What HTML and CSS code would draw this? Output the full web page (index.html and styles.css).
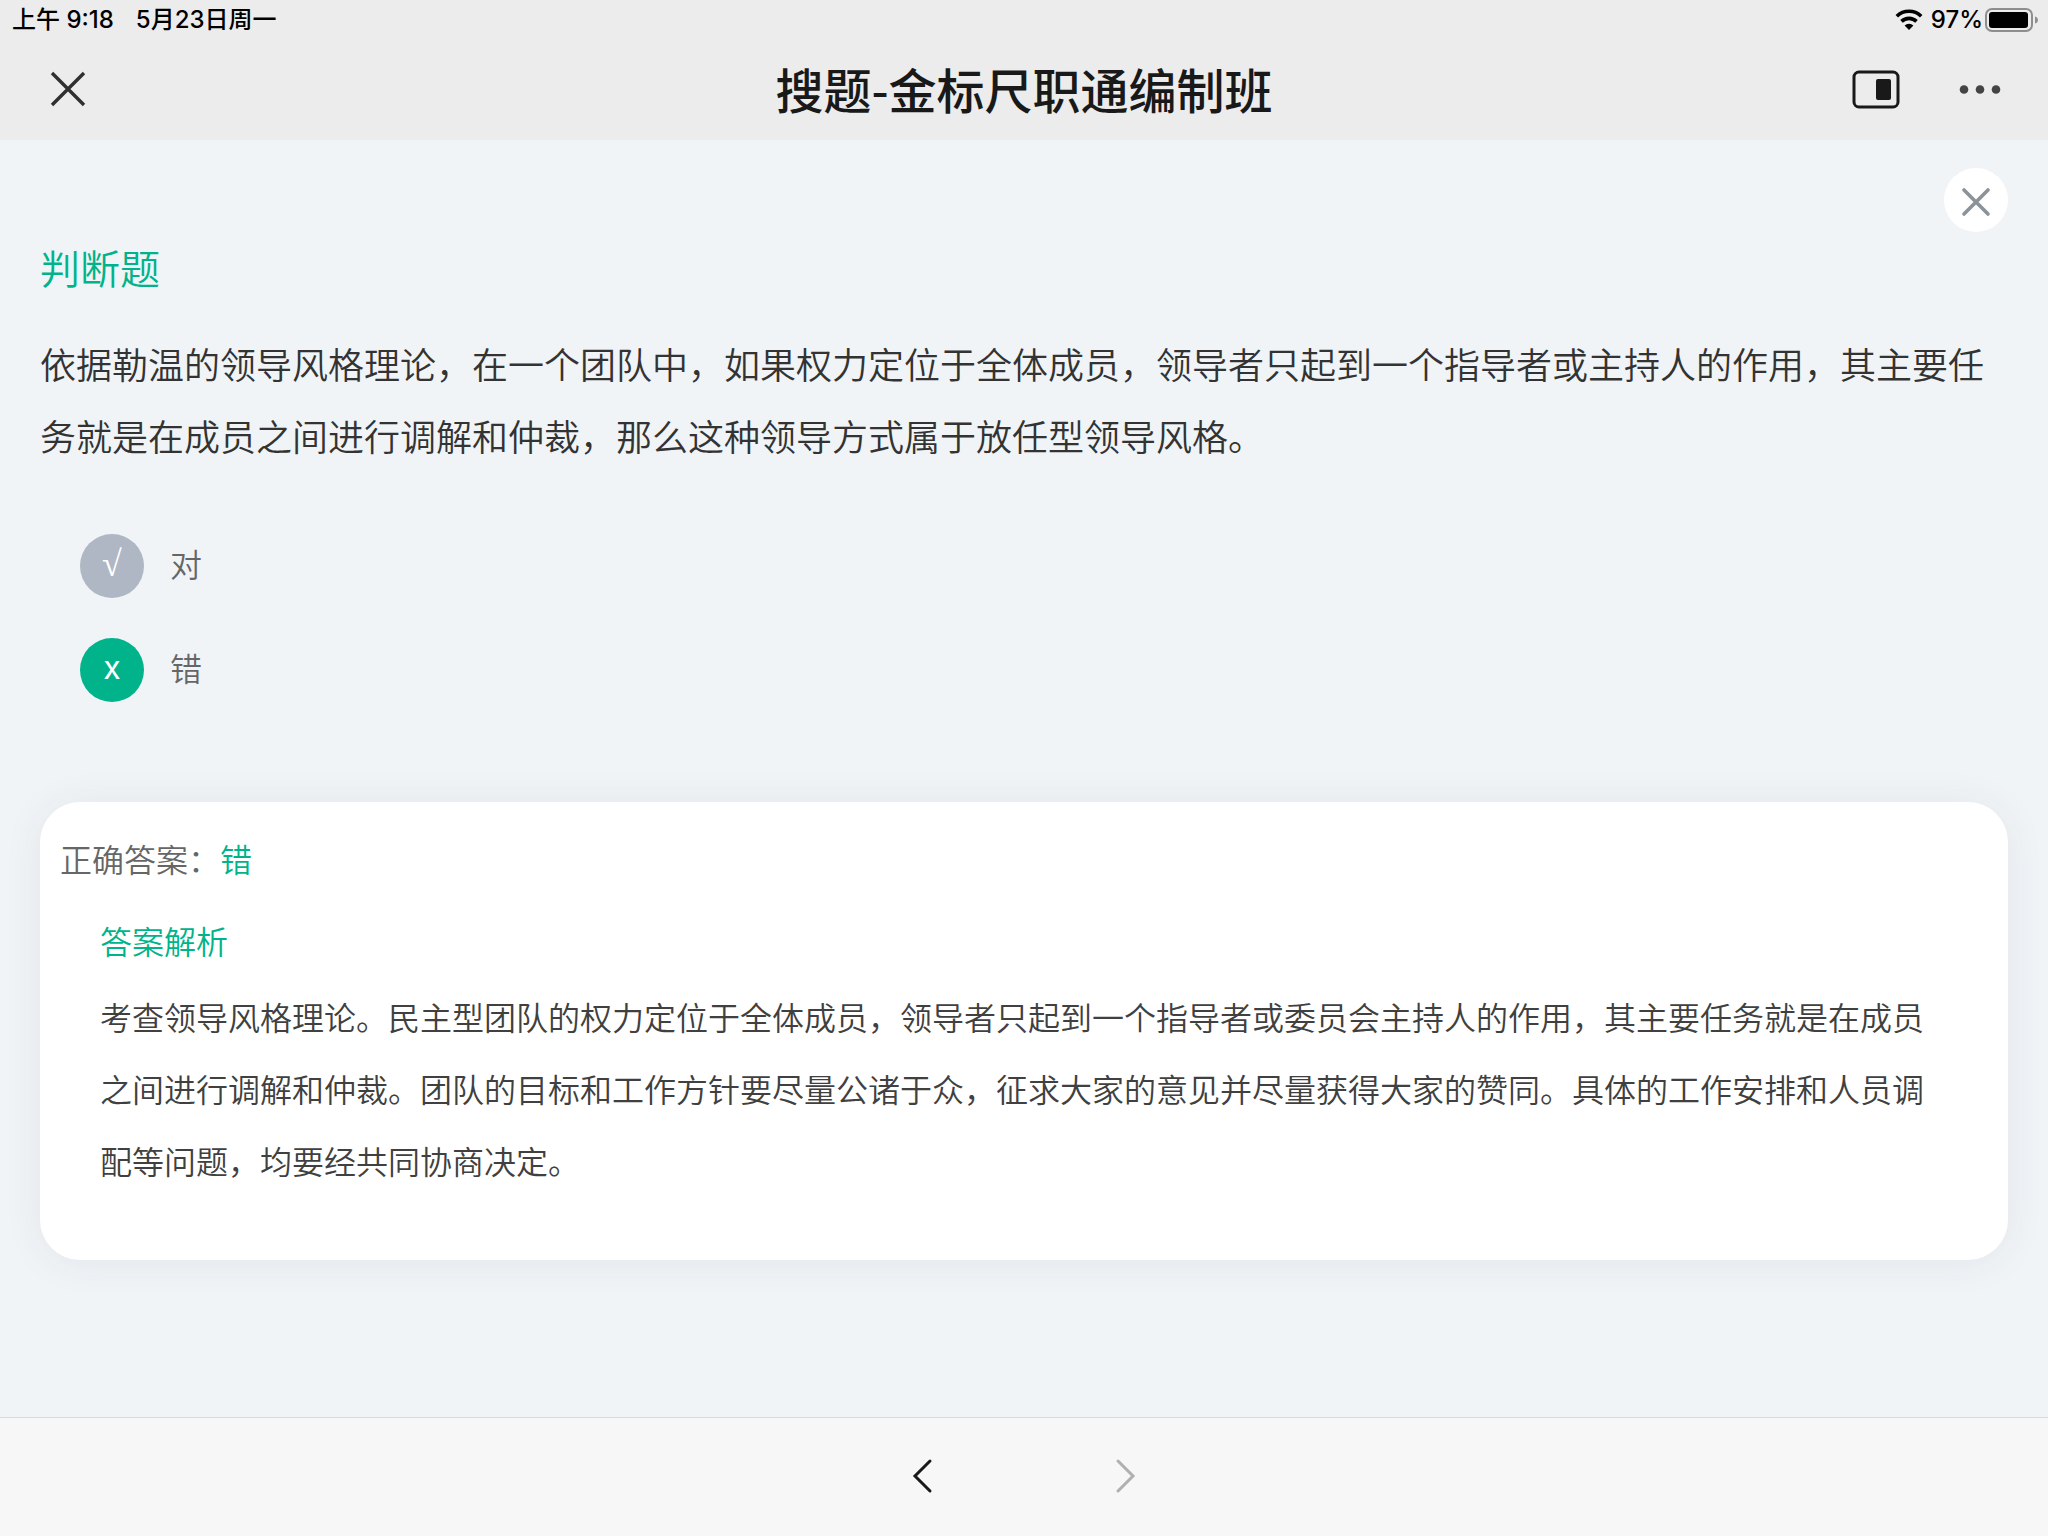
FILE: index.html
```html
<!DOCTYPE html>
<html lang="zh-CN">
<head>
<meta charset="utf-8">
<meta name="viewport" content="width=device-width, initial-scale=1">
<title>搜题-金标尺职通编制班</title>
<link rel="stylesheet" href="styles.css">
</head>
<body>
<header class="top">
  <div class="status">
    <div class="status-group status-time">
      <span>上午 9:18</span>
      <span>5月23日周一</span>
    </div>
    <div class="status-group status-power">
      <svg class="wifi" viewBox="0 0 28 22" aria-hidden="true">
        <path d="M1.800 7.200a17.500 17.500 0 0 1 24.400 0" fill="none" stroke="#000" stroke-width="3.600"/>
        <path d="M6.500 12.400a10.800 10.800 0 0 1 15 0" fill="none" stroke="#000" stroke-width="3.600"/>
        <path d="M14 21l-4.400-4.400a6.300 6.300 0 0 1 8.800 0z" fill="#000"/>
      </svg>
      <span>97%</span>
      <svg class="battery" viewBox="0 0 54 24" aria-hidden="true">
        <rect x="1" y="1" width="46" height="22" rx="6" fill="none" stroke="#8e8e8e" stroke-width="2"/>
        <rect x="4" y="4" width="39" height="16" rx="3" fill="#000"/>
        <path d="M50 8.500c4 1 4 6 0 7z" fill="#8e8e8e"/>
      </svg>
    </div>
  </div>
  <div class="titlebar">
    <div class="titlebar-side">
      <button class="icon-button" type="button" aria-label="关闭">
        <svg viewBox="0 0 48 40"><path d="M8 3l32 32M40 3L8 35" stroke="#303030" stroke-width="3.400" fill="none"/></svg>
      </button>
    </div>
    <h1 class="page-title">搜题-金标尺职通编制班</h1>
    <div class="titlebar-side titlebar-actions">
      <button class="icon-button" type="button" aria-label="浮窗">
        <svg viewBox="0 0 48 40"><rect x="2" y="2" width="44" height="35" rx="5" fill="none" stroke="#191919" stroke-width="3"/><rect x="24" y="9" width="15" height="21" rx="2" fill="#191919"/></svg>
      </button>
      <button class="icon-button" type="button" aria-label="更多">
        <svg viewBox="0 0 48 40" fill="#444"><circle cx="8" cy="19.500" r="4.300"/><circle cx="24" cy="19.500" r="4.300"/><circle cx="40" cy="19.500" r="4.300"/></svg>
      </button>
    </div>
  </div>
</header>

<main class="content">
  <button class="dismiss" type="button" aria-label="关闭题目">
    <svg viewBox="0 0 64 64"><path d="M20 22l24 24M44 22L20 46" stroke="#8b9298" stroke-width="3.600" stroke-linecap="round" fill="none"/></svg>
  </button>
  <h2 class="kind">判断题</h2>
  <p class="question" id="question">依据勒温的领导风格理论，在一个团队中，如果权力定位于全体成员，领导者只起到一个指导者或主持人的作用，其主要任务就是在成员之间进行调解和仲裁，那么这种领导方式属于放任型领导风格。</p>
  <div class="options" role="radiogroup" aria-labelledby="question">
    <label class="option">
      <input class="option-input" type="radio" name="answer" value="true">
      <span class="option-mark option-mark-root" aria-hidden="true">√</span>
      <span class="option-text">对</span>
    </label>
    <label class="option">
      <input class="option-input" type="radio" name="answer" value="false" checked>
      <span class="option-mark" aria-hidden="true">x</span>
      <span class="option-text">错</span>
    </label>
  </div>
  <section class="card">
    <p class="correct">正确答案：<span class="correct-value">错</span></p>
    <div class="analysis">
      <h3 class="analysis-title">答案解析</h3>
      <p class="analysis-text">考查领导风格理论。民主型团队的权力定位于全体成员，领导者只起到一个指导者或委员会主持人的作用，其主要任务就是在成员之间进行调解和仲裁。团队的目标和工作方针要尽量公诸于众，征求大家的意见并尽量获得大家的赞同。具体的工作安排和人员调配等问题，均要经共同协商决定。</p>
    </div>
  </section>
</main>

<nav class="pager" aria-label="页面导航">
  <button class="pager-button" type="button" aria-label="后退">
    <svg viewBox="0 0 40 40"><path d="M27 4L12 19l15 15" fill="none" stroke="#191919" stroke-width="3" stroke-linecap="round"/></svg>
  </button>
  <button class="pager-button" type="button" aria-label="前进" disabled>
    <svg viewBox="0 0 40 40"><path d="M13 4l15 15-15 15" fill="none" stroke="#b0b0b0" stroke-width="3" stroke-linecap="round"/></svg>
  </button>
</nav>
</body>
</html>
```
FILE: styles.css
```css
* {
  box-sizing: border-box;
}

body {
  margin: 0;
  min-height: 100vh;
  display: flex;
  flex-direction: column;
  background: #f0f4f7;
  color: #333;
  font-family: "Noto Sans CJK SC", sans-serif;
  font-size: 32px;
  font-weight: 350;
  line-height: 48px;
}

h1, h2, h3, p {
  margin: 0;
  font-weight: inherit;
}

button {
  padding: 0;
  border: 0;
  background: none;
  cursor: pointer;
}

svg {
  display: block;
}

/* Status and title bars */
.top {
  background: #ececec;
}

.status {
  display: flex;
  justify-content: space-between;
  padding: 0 9px 0 12px;
  color: #000;
  font-family: Inter, "Noto Sans CJK SC", sans-serif;
  font-size: 24px;
  font-weight: 500;
  line-height: 40px;
}

.status-group {
  display: flex;
  align-items: center;
}

.status-time {
  gap: 22px;
}

.wifi {
  width: 28px;
  height: 22px;
  margin-right: 8px;
}

.battery {
  width: 54px;
  height: 24px;
  margin-left: 2px;
}

.titlebar {
  display: flex;
  align-items: center;
  height: 100px;
  padding: 0 44px;
}

.titlebar-side {
  display: flex;
  flex: 1;
}

.titlebar-actions {
  justify-content: flex-end;
  gap: 56px;
}

.icon-button,
.icon-button svg {
  width: 48px;
  height: 40px;
}

.page-title {
  padding-bottom: 4px;
  color: #191919;
  font-size: 48px;
  font-weight: 500;
  line-height: 60px;
}

/* Question */
.content {
  flex: 1;
  display: flex;
  flex-direction: column;
  padding: 28px 40px 60px;
}

.dismiss {
  align-self: flex-end;
  width: 64px;
  height: 64px;
  border-radius: 50%;
  background: #fff;
}

.kind {
  margin-top: 11px;
  color: #00b38a;
  font-size: 40px;
}

.question {
  margin-top: 36px;
  font-size: 36px;
  line-height: 72px;
}

.options {
  display: flex;
  flex-direction: column;
  align-items: flex-start;
  gap: 40px;
  margin: 63px 40px 100px;
}

.option {
  position: relative;
  display: flex;
  align-items: center;
  gap: 26px;
  color: #666;
  cursor: pointer;
}

.option-input {
  position: absolute;
  width: 64px;
  height: 64px;
  margin: 0;
  opacity: 0;
}

.option-mark {
  width: 64px;
  height: 64px;
  border-radius: 50%;
  background: #afb7c4;
  color: #fff;
  font-family: Inter, sans-serif;
  font-size: 32px;
  font-weight: 400;
  line-height: 60px;
  text-align: center;
}

.option-mark-root {
  font-family: "Liberation Serif", serif;
  font-size: 36px;
}

.option-text {
  padding-bottom: 6px;
}

.option-input:checked + .option-mark {
  background: #00b38a;
}

/* Answer card */
.card {
  padding: 32px 20px 64px;
  border-radius: 40px;
  background: #fff;
  box-shadow: 0 2px 40px rgba(50, 50, 70, 0.07);
}

.correct {
  color: #666;
}

.correct-value,
.analysis-title {
  color: #00b38a;
}

.analysis {
  padding: 0 40px;
}

.analysis-title {
  margin: 34px 0 16px;
  font-size: 32px;
}

.analysis-text {
  color: #404040;
  line-height: 72px;
}

/* Bottom navigation */
.pager {
  display: flex;
  justify-content: center;
  align-items: center;
  gap: 162px;
  height: 119px;
  border-top: 1px solid #d5dadf;
  background: #f7f7f7;
}

.pager-button,
.pager-button svg {
  width: 40px;
  height: 40px;
}
```
